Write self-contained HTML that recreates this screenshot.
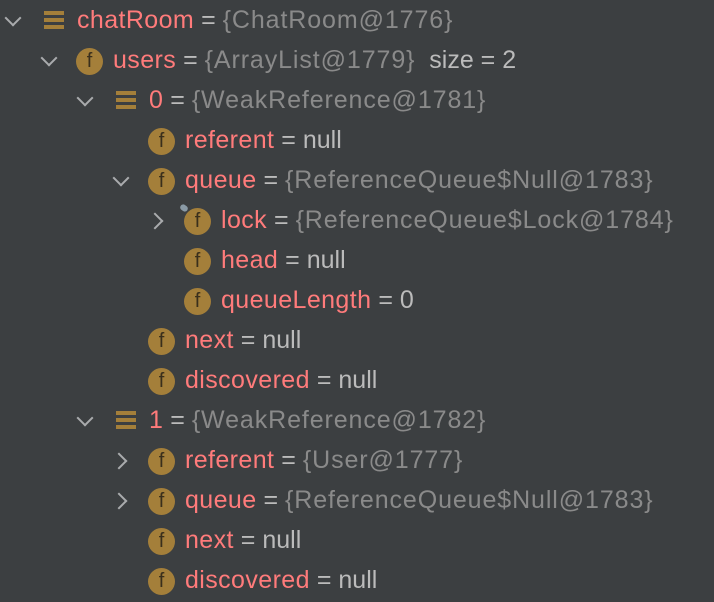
<!DOCTYPE html>
<html><head><style>
body{margin:0;width:714px;height:602px;background:#3c3f41;overflow:hidden;font-family:"Liberation Sans",sans-serif;font-size:25px;}
.r{position:absolute;height:40px;line-height:40px;white-space:pre;}
.n{color:#ff7b7b;letter-spacing:0.4px}.e{color:#bbbbbb}.g{color:#8a8a8a;letter-spacing:0.9px}
.chev{position:absolute;width:10px;height:10px;border-right:2px solid #a9abad;border-bottom:2px solid #a9abad;}
.dn{transform:rotate(45deg)}.rt{transform:rotate(-45deg)}
.f{position:absolute;width:27px;height:27px;border-radius:50%;background:#a47f3a;color:#3a2f1c;font-size:20px;line-height:27px;text-align:center;}
.lst{position:absolute;width:20px;height:18px;background:linear-gradient(#a47f3a 0 4px,transparent 4px 7px,#a47f3a 7px 11px,transparent 11px 14px,#a47f3a 14px 18px);}
.pin{position:absolute;width:8px;height:6px;background:#8a9aa6;border-radius:3px;transform:rotate(35deg);}
</style></head><body>
<div id="c"></div>
<script>
const rows=[
[0,'d','l','chatRoom',' = ','{ChatRoom@1776}',''],
[1,'d','f','users',' = ','{ArrayList@1779}','  size = 2'],
[2,'d','l','0',' = ','{WeakReference@1781}',''],
[3,'','f','referent',' = null','',''],
[3,'d','f','queue',' = ','{ReferenceQueue$Null@1783}',''],
[4,'r','p','lock',' = ','{ReferenceQueue$Lock@1784}',''],
[4,'','f','head',' = null','',''],
[4,'','f','queueLength',' = 0','',''],
[3,'','f','next',' = null','',''],
[3,'','f','discovered',' = null','',''],
[2,'d','l','1',' = ','{WeakReference@1782}',''],
[3,'r','f','referent',' = ','{User@1777}',''],
[3,'r','f','queue',' = ','{ReferenceQueue$Null@1783}',''],
[3,'','f','next',' = null','',''],
[3,'','f','discovered',' = null','','']];
let h='';
rows.forEach((r,i)=>{
 const tx=77+36*r[0], cy=21+40*i;
 if(r[1]=='d')h+=`<div class="chev dn" style="left:${tx-70}px;top:${cy-9}px"></div>`;
 if(r[1]=='r')h+=`<div class="chev rt" style="left:${tx-72}px;top:${cy-6}px"></div>`;
 if(r[2]=='l')h+=`<div class="lst" style="left:${tx-33}px;top:${cy-10}px"></div>`;
 else{h+=`<div class="f" style="left:${tx-37}px;top:${cy-13}px">f</div>`;
  if(r[2]=='p')h+=`<div class="pin" style="left:${tx-41}px;top:${cy-16}px"></div>`;}
 h+=`<div class="r" style="left:${tx}px;top:${cy-21}px"><span class="n">${r[3]}</span><span class="e">${r[4]}</span><span class="g">${r[5]}</span><span class="e">${r[6]}</span></div>`;
});
document.getElementById('c').innerHTML=h;
</script>
</body></html>
